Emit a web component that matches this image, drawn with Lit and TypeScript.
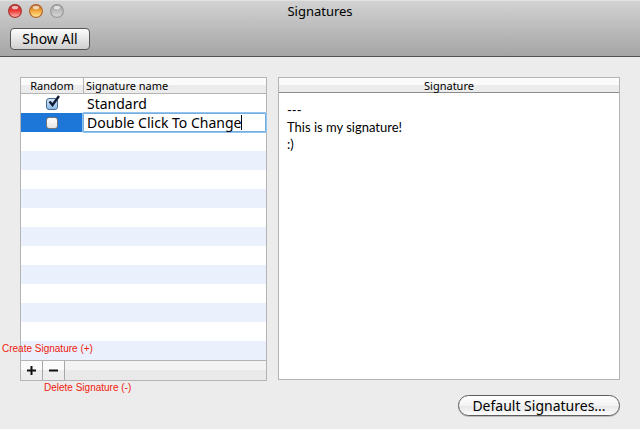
import { LitElement, html, css } from "lit";
import { customElement, state } from "lit/decorators.js";
import { classMap } from "lit/directives/class-map.js";

interface Signature {
  name: string;
  random: boolean;
  editing?: boolean;
}

@customElement("app-root")
export class AppRoot extends LitElement {
  static styles = css`
    :host {
      display: flex;
      flex-direction: column;
      min-height: 100vh;
      background: #ececec;
      color: #000;
      font: 13px/18px "Noto Sans", "Open Sans", sans-serif;
    }
    * { box-sizing: border-box; }
    button, input { font: inherit; color: inherit; }
    button { padding: 0; }
    .bar {
      border-top: 1px solid #e2e2e2;
      border-bottom: 1px solid #515151;
      background: linear-gradient(#d2d2d2, #a5a5a5);
      height: 57px;
    }
    .titlebar {
      display: grid;
      grid-template-columns: 1fr auto 1fr;
      align-items: center;
      height: 20px;
      padding: 0 8px;
    }
    .title { margin: 0; font: inherit; }
    .lights { display: flex; gap: 7px; }
    .light { width: 14px; height: 14px; border: 0; background: none; }
    .light svg { display: block; }
    .tools { padding: 7px 10px; }
    .show {
      display: block;
      width: 80px;
      height: 22px;
      border: 1px solid #565656;
      border-radius: 4px;
      background: linear-gradient(#fcfcfc, #cfcfcf);
      font-size: 14px;
      line-height: 20px;
    }
    .main {
      flex: 1;
      display: grid;
      grid-template-columns: 247px 1fr;
      column-gap: 11px;
      padding: 20px 20px 0;
      align-content: start;
    }
    .list { border: 1px solid #b4b4b4; background: #fff; }
    table { width: 100%; border-collapse: separate; border-spacing: 0; table-layout: fixed; }
    .c1 { width: 62px; }
    th {
      height: 16px;
      padding: 0;
      background: linear-gradient(#fbfbfb 50%, #ececec 50%);
      border-bottom: 1px solid #b4b4b4;
      font-size: 11px;
      line-height: 15px;
      font-weight: 400;
    }
    th.name { text-align: left; padding-left: 2px; border-left: 1px solid #b4b4b4; }
    td { height: 19px; padding: 0; font-size: 14px; line-height: 19px; }
    td.name { padding-left: 4px; }
    td.name.editing { padding: 0; }
    tr.stripe { background: #eaf1fd; }
    tr.selected { background: #1d77d8; }
    .check { display: grid; place-items: center; }
    .tick {
      grid-area: 1 / 1;
      appearance: none;
      margin: 0;
      width: 12px;
      height: 12px;
      border: 1px solid #777;
      border-radius: 3px;
      background: linear-gradient(#fff, #e6e6e6);
    }
    .tick:checked { border-color: #4a6c92; background: linear-gradient(#d5e6f6, #8dbbe8); }
    .mark { grid-area: 1 / 1; pointer-events: none; margin: -4px 0 0 4px; }
    .field {
      display: flex;
      align-items: center;
      height: 19px;
      padding-left: 4px;
      border-radius: 1px;
      background: #fff;
      box-shadow: inset 0 0 0 1px #74acdc, 0 0 0 1px #92c4ee;
    }
    .edit {
      field-sizing: content;
      max-width: 100%;
      height: 19px;
      padding: 0;
      border: 0;
      outline: 0;
      background: none;
      caret-color: transparent;
    }
    .caret { width: 1px; height: 15px; background: #000; }
    .foot {
      display: flex;
      height: 20px;
      border-top: 1px solid #b4b4b4;
      background: linear-gradient(#f3f3f3 50%, #e9e9e9 50%);
    }
    .foot button {
      width: 22px;
      border: 0;
      border-right: 1px solid #a8a8a8;
      background: linear-gradient(#fbfbfb 50%, #ededed 50%);
      display: grid;
      place-items: center;
    }
    .preview {
      display: flex;
      flex-direction: column;
      border: 1px solid #b4b4b4;
      margin-bottom: 1px;
      background: #fff;
    }
    .head {
      margin: 0;
      height: 15px;
      border-bottom: 1px solid #8c8c8c;
      background: linear-gradient(#fbfbfb 50%, #ececec 50%);
      font-size: 11px;
      line-height: 16px;
      font-weight: 400;
      text-align: center;
    }
    .body {
      flex: 1;
      border: 0;
      resize: none;
      outline: 0;
      padding: 9px 8px;
      background: #fff;
      color: #000;
      font: 13px/17px Lato, sans-serif;
    }
    .actions { display: flex; justify-content: flex-end; padding: 14px 20px 0; height: 48px; }
    .default {
      width: 162px;
      height: 21px;
      border: 1px solid #5c5c5c;
      border-radius: 11px;
      background: linear-gradient(#fff, #f3f3f3 50%, #e6e6e6 50%, #fbfbfb);
      font-size: 14px;
      line-height: 19px;
      box-shadow: 0 1px 0 #bcbcbc;
    }
    .note {
      position: absolute;
      color: #f0200c;
      font: 10px/12px "Liberation Sans", sans-serif;
    }
    .create { left: 2px; top: 343px; }
    .delete { left: 44px; top: 382px; }
  `;

  @state() private signatures: Signature[] = [
    { name: "Standard", random: true },
    { name: "Double Click To Change", random: false, editing: true },
  ];

  private light(id: string, edge: string, mid: string, glow: string, label: string) {
    return html`<button class="light" aria-label=${label}>
      <svg width="14" height="14" viewBox="0 0 14 14">
        <defs>
          <linearGradient id=${id} x1="0" y1="0" x2="0" y2="1">
            <stop offset="0" stop-color=${edge} />
            <stop offset=".5" stop-color=${mid} />
            <stop offset="1" stop-color=${glow} />
          </linearGradient>
        </defs>
        <circle cx="7" cy="7" r="6.4" fill="url(#${id})" stroke=${edge} stroke-width="1.1" />
        <ellipse cx="7" cy="3.5" rx="3.2" ry="1.8" fill="#fff" opacity=".65" />
      </svg>
    </button>`;
  }

  private row(s: Signature) {
    return html`<tr class=${classMap({ selected: !!s.editing })}>
      <td>
        <div class="check">
          <input class="tick" type="checkbox" .checked=${s.random} aria-label="Random: ${s.name}" />
          ${s.random
            ? html`<svg class="mark" width="14" height="14" viewBox="0 0 14 14">
                <path d="M2.5 6.5 L5.5 10 L12 1" fill="none" stroke="#111c33" stroke-width="2.4" />
              </svg>`
            : ""}
        </div>
      </td>
      <td class=${classMap({ name: true, editing: !!s.editing })}>
        ${s.editing
          ? html`<div class="field">
              <input class="edit" type="text" .value=${s.name} aria-label="Signature name" />
              <span class="caret"></span>
            </div>`
          : s.name}
      </td>
    </tr>`;
  }

  render() {
    return html`
      <header class="bar">
        <div class="titlebar">
          <div class="lights">
            ${this.light("red", "#a83430", "#ee3b38", "#ffc0b8", "Close")}
            ${this.light("amber", "#b4642a", "#f2a93c", "#ffec9c", "Minimize")}
            ${this.light("grey", "#999", "#bdbdbd", "#d8d8d8", "Zoom")}
          </div>
          <h1 class="title">Signatures</h1>
        </div>
        <div class="tools"><button class="show">Show All</button></div>
      </header>
      <main class="main">
        <section class="list">
          <table>
            <colgroup><col class="c1" /><col /></colgroup>
            <thead><tr><th>Random</th><th class="name">Signature name</th></tr></thead>
            <tbody>
              ${this.signatures.map((s) => this.row(s))}
              ${Array.from({ length: 12 }, (_, i) => html`<tr class=${classMap({ stripe: i % 2 === 1 })}><td></td><td></td></tr>`)}
            </tbody>
          </table>
          <div class="foot">
            <button aria-label="Create signature"><svg width="9" height="9"><path d="M0 4.5H9M4.5 0V9" stroke="#111" stroke-width="2" /></svg></button>
            <button aria-label="Delete signature"><svg width="9" height="9"><path d="M0 4.5H9" stroke="#111" stroke-width="2" /></svg></button>
          </div>
        </section>
        <section class="preview">
          <h2 class="head" id="sig">Signature</h2>
          <textarea class="body" aria-labelledby="sig" .value=${"---\nThis is my signature!\n:)"}></textarea>
        </section>
      </main>
      <footer class="actions"><button class="default">Default Signatures...</button></footer>
      <span class="note create">Create Signature (+)</span>
      <span class="note delete">Delete Signature (-)</span>
    `;
  }
}
